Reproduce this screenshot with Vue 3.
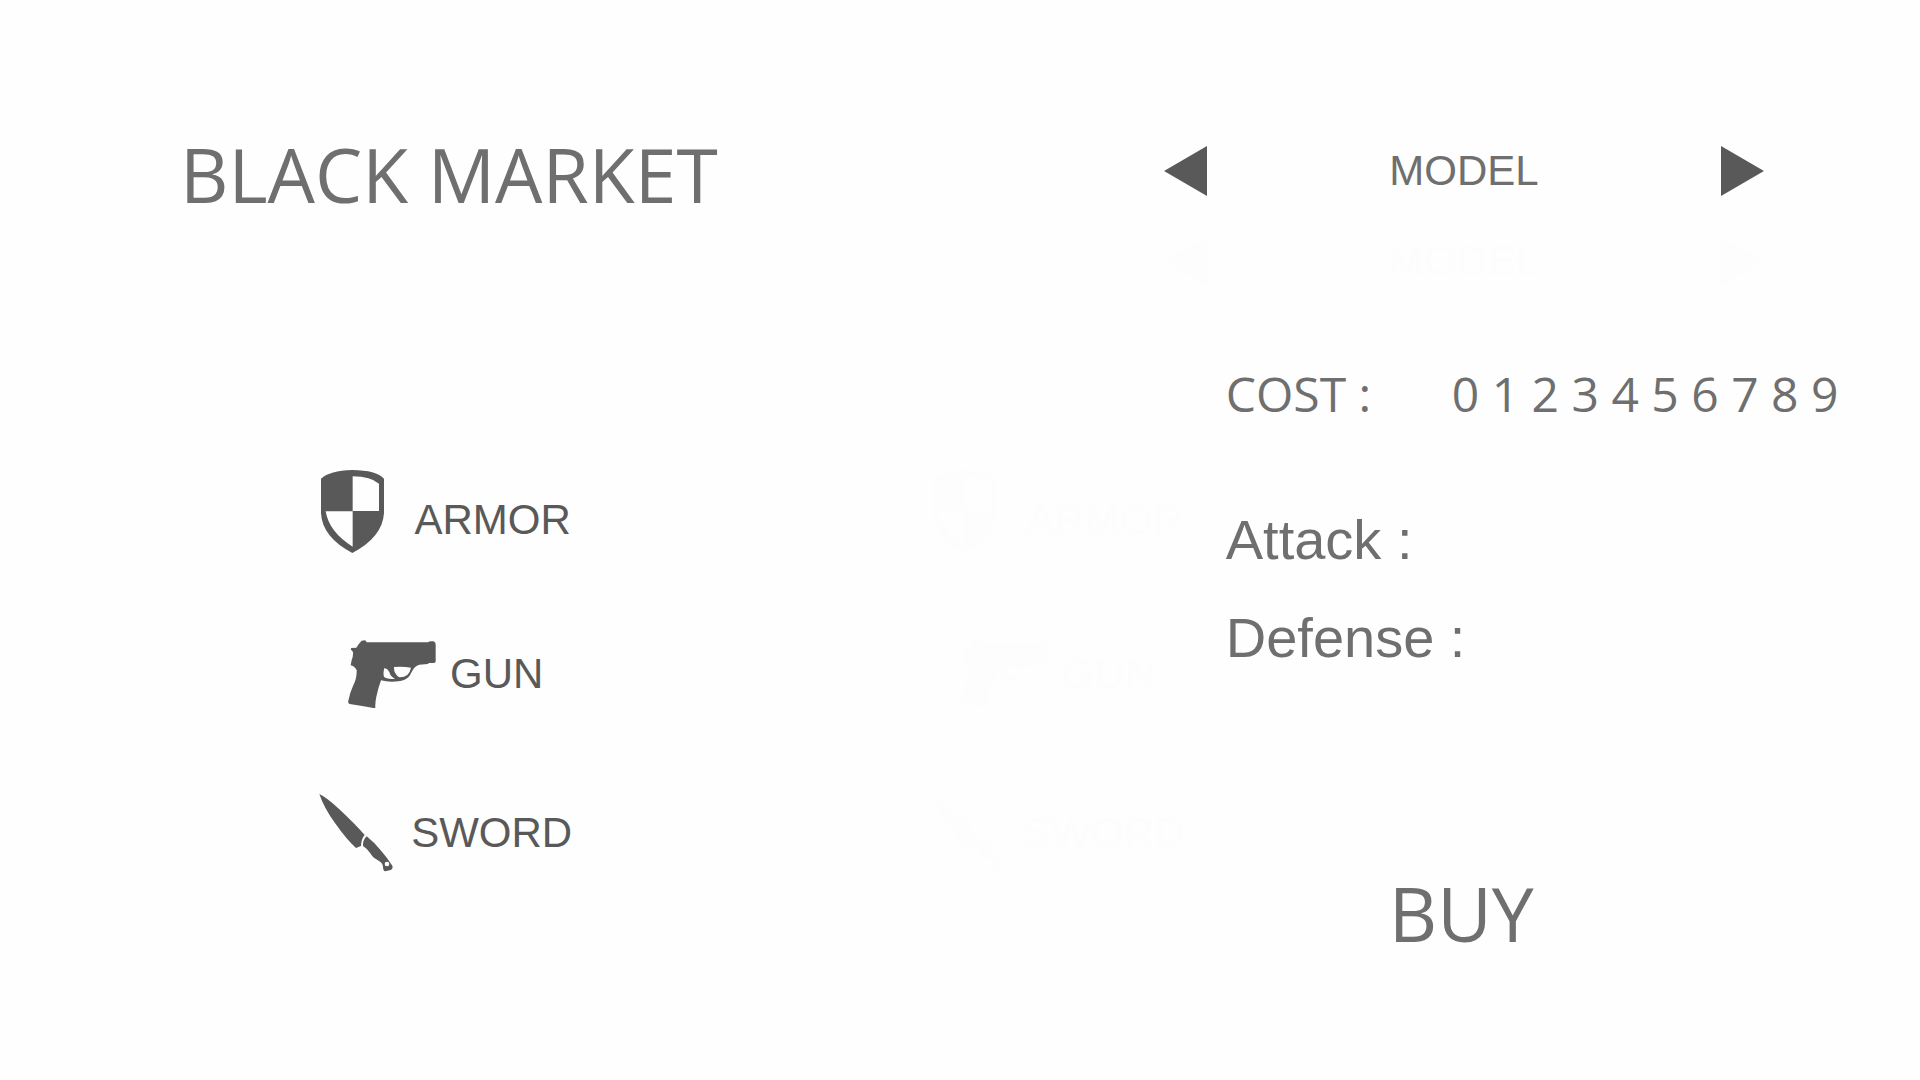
<script setup>
import { ref } from 'vue'

const items = [
  {
    name: 'ARMOR',
    low: true,
    width: 80,
    height: 84,
    box: '66 60 240 252',
    path: 'M66 86Q92 62 160 60Q232 61 255 86V190Q250 262 160 309Q70 262 66 190ZM161 79V183H240V101Q216 80 161 79ZM80 184Q90 246 161 290V184Z'
  },
  {
    name: 'GUN',
    low: false,
    width: 88,
    height: 68,
    box: '81 62 264 204',
    path: 'M122 64L133 63L137 69H321Q325 64 337 66Q343 68 344 74V127Q342 131 337 131L324 131L320 134L295 136Q280 140 272 158Q262 182 238 185Q205 190 180 183Q172 205 166 232Q162 250 163 267L128 261L86 254Q80 252 82 244Q86 222 96 200Q108 178 107 152Q100 140 89 138L92 122Q97 112 96 98L89 90L91 86L106 85Q112 74 122 64ZM190 146Q185 165 190 174Q202 181 222 178Q208 172 205 158Q200 148 190 146ZM219 143Q218 164 235 174Q264 175 270 145Q245 140 219 143Z'
  },
  {
    name: 'SWORD',
    low: false,
    width: 78,
    height: 78,
    box: '57 48 234 234',
    path: 'M58 48Q80 58 118 94Q165 138 194 171Q184 182 183 204L168 210Q140 185 105 135Q72 90 58 48ZM200 175Q225 195 242 217Q262 240 277 263Q280 272 272 276L256 280Q249 278 249 266Q248 254 236 248Q218 240 211 226Q202 212 189 204Q188 186 200 175ZM254 258a7 7 0 1 0 14 0a7 7 0 1 0 -14 0Z'
  }
]

const selected = ref('')
</script>

<template>
  <main class="market">
    <header class="top">
      <h1 class="title">BLACK MARKET</h1>
      <div class="selectors">
        <div v-for="n in 2" :key="n" class="selector" :class="{ faint: n === 2 }">
          <button type="button" aria-label="Previous model">
            <svg width="43" height="50" viewBox="0 0 43 50"><path d="M43 0V50L0 25Z" /></svg>
          </button>
          <span class="model">MODEL</span>
          <button type="button" aria-label="Next model">
            <svg width="43" height="50" viewBox="0 0 43 50"><path d="M0 0V50L43 25Z" /></svg>
          </button>
        </div>
      </div>
    </header>

    <div class="content">
      <nav v-for="n in 2" :key="n" class="menu" :class="{ faint: n === 2 }">
        <button
          v-for="item in items"
          :key="item.name"
          type="button"
          class="item"
          :class="{ low: item.low }"
          @click="selected = item.name"
        >
          <svg :width="item.width" :height="item.height" :viewBox="item.box" aria-hidden="true">
            <path :d="item.path" fill-rule="evenodd" />
          </svg>
          <span>{{ item.name }}</span>
        </button>
      </nav>

      <section class="details">
        <div class="cost">
          <span class="cost-label">COST :</span>
          <span>0 1 2 3 4 5 6 7 8 9</span>
        </div>
        <div class="stats">
          <p>Attack :</p>
          <p>Defense :</p>
        </div>
        <button type="button" class="buy">BUY</button>
      </section>
    </div>
  </main>
</template>

<style>
body {
  margin: 0;
  background: #fefefe;
}
</style>

<style scoped>
.market {
  box-sizing: border-box;
  min-height: 100vh;
  padding: 136px 0 80px;
  font-family: "Liberation Sans", Arial, sans-serif;
  color: #6f6f6f;
  overflow: hidden;
}

button {
  padding: 0;
  border: 0;
  background: none;
  font: inherit;
  color: inherit;
  cursor: pointer;
}

svg {
  display: block;
  flex: none;
  fill: currentColor;
}

.top {
  display: flex;
  justify-content: space-between;
  align-items: flex-start;
  padding: 0 8.125% 0 9.375%;
}

.title,
.buy {
  margin: 0;
  font-family: "Open Sans", "Noto Sans", sans-serif;
  font-size: 75px;
  font-weight: 400;
  line-height: 76px;
  white-space: nowrap;
}

.selectors {
  display: flex;
  flex-direction: column;
  gap: 40px;
  width: 600px;
  padding-top: 10px;
}

.selector {
  display: flex;
  justify-content: space-between;
  align-items: center;
  height: 50px;
}

.selector button {
  color: #595959;
}

.model {
  font-size: 42px;
  line-height: 50px;
}

.content {
  display: flex;
  align-items: flex-start;
  padding-left: 16.65%;
  margin-top: 68px;
}

.menu {
  display: flex;
  flex-direction: column;
  align-items: center;
  gap: 86px;
  flex: none;
  width: 252px;
  margin: 116px 22.5% 0 0;
  color: #595959;
}

.menu.faint {
  margin-right: 42px;
}

.item {
  display: flex;
  align-items: center;
  gap: 14px;
  font-size: 42px;
  line-height: 68px;
  white-space: nowrap;
}

.item.low {
  align-items: flex-end;
}

.selector.faint,
.selector.faint button,
.menu.faint {
  color: #fdfdfd;
}

.details {
  flex: 1;
  display: flex;
  flex-direction: column;
  align-items: flex-start;
}

.cost {
  display: flex;
  margin-top: 16px;
  font-family: "Open Sans", "Noto Sans", sans-serif;
  font-size: 48px;
  line-height: 48px;
  white-space: nowrap;
}

.cost-label {
  width: 226px;
}

.stats {
  margin-top: 73px;
  font-size: 56px;
  line-height: 98px;
  white-space: nowrap;
}

.stats p {
  margin: 0;
}

.buy {
  margin: 188px 0 0 163px;
}
</style>
